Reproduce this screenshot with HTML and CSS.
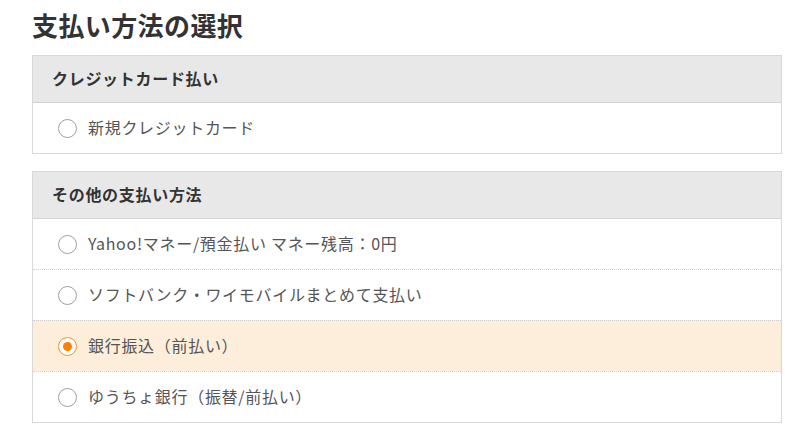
FILE: index.html
```html
<!DOCTYPE html>
<html lang="ja">
<head>
<meta charset="utf-8">
<title>支払い方法の選択</title>
<link rel="stylesheet" href="styles.css">
</head>
<body>
<div class="page">
  <h1 class="title">支払い方法の選択</h1>

  <section class="box">
    <div class="box-head">クレジットカード払い</div>
    <label class="option">
      <span class="radio"></span>
      <span class="label">新規クレジットカード</span>
    </label>
  </section>

  <section class="box">
    <div class="box-head">その他の支払い方法</div>
    <label class="option">
      <span class="radio"></span>
      <span class="label">Yahoo!マネー/預金払い マネー残高：0円</span>
    </label>
    <label class="option">
      <span class="radio"></span>
      <span class="label">ソフトバンク・ワイモバイルまとめて支払い</span>
    </label>
    <label class="option selected">
      <span class="radio checked"></span>
      <span class="label">銀行振込（前払い）</span>
    </label>
    <label class="option">
      <span class="radio"></span>
      <span class="label">ゆうちょ銀行（振替/前払い）</span>
    </label>
  </section>
</div>
</body>
</html>
```

FILE: styles.css
```css
html, body {
  margin: 0;
  padding: 0;
  background: #ffffff;
}

body {
  font-family: "Noto Sans CJK JP", "Noto Sans", sans-serif;
  color: #333333;
}

.page {
  width: 750px;
  padding: 7px 0 0 32px;
}

.title {
  margin: 0 0 12px 0;
  font-size: 26px;
  line-height: 36px;
  font-weight: 700;
  letter-spacing: 0.4px;
  color: #333333;
}

.box {
  border: 1px solid #d9d9d9;
  margin-bottom: 17px;
  background: #ffffff;
}

.box-head {
  height: 46px;
  box-sizing: border-box;
  display: flex;
  align-items: center;
  padding-left: 19px;
  padding-bottom: 2px;
  background: #e8e8e8;
  border-bottom: 1px solid #d4d4d4;
  font-size: 16px;
  font-weight: 700;
  letter-spacing: 0.7px;
  color: #333333;
}

.box-head {
  height: 47px;
}

.option {
  height: 50px;
  display: flex;
  align-items: center;
  padding-left: 25px;
  gap: 11px;
}

.option + .option {
  border-top: 1px dotted #cfcfcf;
}

.option.selected {
  background: #fdeedb;
}

.radio {
  width: 19px;
  height: 19px;
  box-sizing: border-box;
  border: 1.5px solid #a0a0a0;
  border-radius: 50%;
  background: #ffffff;
  display: flex;
  align-items: center;
  justify-content: center;
  flex-shrink: 0;
}

.radio.checked {
  border-color: #ff8a1e;
}

.radio.checked::after {
  content: "";
  width: 9px;
  height: 9px;
  border-radius: 50%;
  background: #ff7f00;
}

.label {
  font-size: 16px;
  letter-spacing: 0.7px;
  color: #555555;
  line-height: 20px;
  padding-bottom: 3px;
}
```
